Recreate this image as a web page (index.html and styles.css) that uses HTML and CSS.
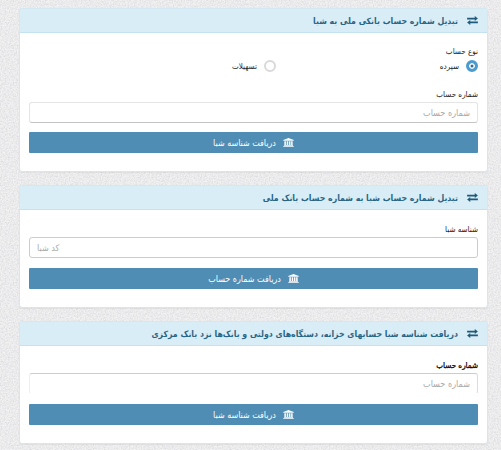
FILE: index.html
```html
<!DOCTYPE html>
<html lang="fa" dir="rtl">
<head>
<meta charset="utf-8">
<title>تبدیل شماره حساب</title>
<link rel="stylesheet" href="styles.css">
</head>
<body>
<svg class="defs" width="0" height="0" aria-hidden="true">
  <symbol id="swap" viewBox="0 0 12 10"><path d="M0 2h8.5V0L12 2.9 8.5 5.6V3.8H0zM12 6.2H3.5V4.4L0 7.1l3.5 2.9V8H12z" fill="currentColor"/></symbol>
  <symbol id="bank" viewBox="0 0 14 12"><path d="M7 0l7 2.6v1H0v-1zM1.5 4.4h2v4.8h-2zM4.6 4.4h2v4.8h-2zM7.6 4.4h2v4.8h-2zM10.5 4.4h2v4.8h-2zM1 9.8h12v.9H1zM0 11h14v1H0z" fill="currentColor"/></symbol>
</svg>
<main class="page">
  <section class="panel panel-first">
    <h2 class="panel-head"><svg class="swap"><use href="#swap"/></svg><span>تبدیل شماره حساب بانکی ملی به شبا</span></h2>
    <div class="panel-body">
      <div class="label">نوع حساب</div>
      <div class="radios">
        <label class="radio"><i class="dot on"></i><span>سپرده</span></label>
        <label class="radio"><i class="dot"></i><span>تسهیلات</span></label>
      </div>
      <div class="label label-gap">شماره حساب</div>
      <input class="field" type="text" placeholder="شماره حساب">
      <button class="btn" type="button"><svg class="bank"><use href="#bank"/></svg><span>دریافت شناسه شبا</span></button>
    </div>
  </section>
  <section class="panel">
    <h2 class="panel-head"><svg class="swap"><use href="#swap"/></svg><span>تبدیل شماره حساب شبا به شماره حساب بانک ملی</span></h2>
    <div class="panel-body">
      <div class="label">شناسه شبا</div>
      <input class="field field-ltr" type="text" placeholder="کد شبا">
      <button class="btn" type="button"><svg class="bank"><use href="#bank"/></svg><span>دریافت شماره حساب</span></button>
    </div>
  </section>
  <section class="panel">
    <h2 class="panel-head"><svg class="swap"><use href="#swap"/></svg><span>دریافت شناسه شبا حسابهای خزانه، دستگاه‌های دولتی و بانک‌ها نزد بانک مرکزی</span></h2>
    <div class="panel-body">
      <div class="label label-bold">شماره حساب</div>
      <input class="field field-top" type="text" placeholder="شماره حساب">
      <button class="btn" type="button"><svg class="bank"><use href="#bank"/></svg><span>دریافت شناسه شبا</span></button>
    </div>
  </section>
</main>
</body>
</html>
```
FILE: styles.css
```css
* { box-sizing: border-box; }
html, body { height: 100%; }
body {
  margin: 0;
  overflow: hidden;
  font-family: "DejaVu Sans Condensed", "DejaVu Sans", sans-serif;
  background-color: #f2f2f3;
  background-image: url("data:image/svg+xml,%3Csvg xmlns='http://www.w3.org/2000/svg' width='200' height='200'%3E%3Cfilter id='n'%3E%3CfeTurbulence type='fractalNoise' baseFrequency='.75' numOctaves='2' stitchTiles='stitch'/%3E%3CfeColorMatrix values='0 0 0 0 .55 0 0 0 0 .55 0 0 0 0 .58 1 0 0 0 -.34'/%3E%3C/filter%3E%3Crect width='200' height='200' filter='url(%23n)'/%3E%3C/svg%3E");
}
.defs { position: absolute; }
.page {
  display: flex;
  flex-direction: column;
  gap: 13px;
  padding: 8px 13px 0 19px;
}
.panel {
  background: #fff;
  border: 1px solid #d3e8f3;
  border-radius: 3px;
  box-shadow: 0 1px 1px rgba(0, 0, 0, .05);
}
.panel-head {
  display: flex;
  align-items: center;
  gap: 9px;
  height: 24px;
  margin: 0;
  padding: 0 9px 0 0;
  background: #d9edf7;
  border-bottom: 1px solid #c4e2f0;
  color: #296585;
  font-size: 8.7px;
  font-weight: 700;
  white-space: nowrap;
}
.swap { width: 11px; height: 9px; flex: none; color: #1f5a7a; }
.panel-body { padding: 14px 9px 18px; }
.panel-first .panel-body { padding-top: 13px; }
.label {
  height: 12px;
  font-size: 8px;
  line-height: 12px;
  color: #222;
}
.label-bold { color: #000; -webkit-text-stroke: .25px #000; }
.label-gap { margin-top: 15px; }
.radios { display: flex; height: 16px; }
.radio {
  display: flex;
  align-items: center;
  gap: 7px;
  width: 202px;
  font-size: 8px;
  color: #222;
}
.dot {
  width: 12px;
  height: 12px;
  flex: none;
  border-radius: 50%;
  background: #fff;
  border: 2px solid #d9d9d9;
}
.dot.on {
  border: 3px solid #4a9bd1;
  background: #31708f;
  box-shadow: inset 0 0 0 1.5px #fff;
}
.field {
  display: block;
  width: 100%;
  height: 21px;
  margin-top: 1px;
  padding: 0 7px;
  background: #fff;
  border: 1px solid #e4e4e4;
  border-bottom-color: #c4c4c4;
  border-radius: 3px;
  outline: 0;
  font-family: inherit;
  font-size: 9px;
  color: #555;
}
.field::placeholder { color: #aaa; opacity: 1; }
.field-ltr { text-align: left; border-color: #ccc; }
.field-top { border-color: #ccc #ddd transparent #eee; }
.btn {
  display: flex;
  align-items: center;
  justify-content: center;
  gap: 7px;
  width: 100%;
  height: 21px;
  margin-top: 10px;
  background: #4f8db5;
  border: 0;
  border-radius: 1px;
  color: #fff;
  font-family: inherit;
  font-size: 8.9px;
}
.panel-first .btn { margin-top: 9px; }
.bank { width: 11px; height: 9px; flex: none; }
```
